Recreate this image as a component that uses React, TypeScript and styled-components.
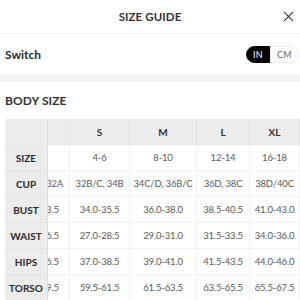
import React, { useLayoutEffect, useRef, useState } from "react";
import styled, { createGlobalStyle } from "styled-components";

const GlobalStyle = createGlobalStyle`
	html, body {
		margin: 0;
		padding: 0;
		background: #fff;
		font-family: Lato, "Open Sans", "Liberation Sans", sans-serif;
		color: #222;
		-webkit-font-smoothing: antialiased;
	}
`;

const Page = styled.div`
	width: 300px;
	height: 300px;
	overflow: hidden;
	background: #fff;
`;

const Header = styled.header`
	display: grid;
	grid-template-columns: 1fr auto 1fr;
	align-items: center;
	height: 33px;
	border-bottom: 1px solid #f1f1f1;
`;

const Title = styled.h1`
	grid-column: 2;
	margin: 0;
	font-size: 11.5px;
	font-weight: 700;
	color: #333;
	letter-spacing: 0.1px;
`;

const CloseButton = styled.button`
	justify-self: end;
	display: flex;
	align-items: center;
	justify-content: center;
	width: 20px;
	height: 20px;
	margin-right: 2px;
	padding: 0;
	border: none;
	background: none;
	color: #333;
	svg {
		width: 11px;
		height: 11px;
	}
`;

const SwitchRow = styled.div`
	display: flex;
	align-items: center;
	justify-content: space-between;
	height: 40px;
	padding: 0 1px 0 5px;
`;

const Label = styled.span`
	font-size: 12px;
	font-weight: 700;
	color: #2a2a2a;
`;

const Toggle = styled.div`
	display: flex;
	height: 17px;
`;

const ToggleOption = styled.button<{ $active: boolean; $side: "left" | "right" }>`
	display: flex;
	align-items: center;
	justify-content: center;
	width: ${(p) => (p.$side === "left" ? "24px" : "29px")};
	height: 100%;
	padding: 0;
	font-family: inherit;
	font-size: 9px;
	letter-spacing: 0.3px;
	border: 1px solid ${(p) => (p.$active ? "#000" : "#ececec")};
	background: ${(p) => (p.$active ? "#000" : "#fff")};
	color: ${(p) => (p.$active ? "#fff" : "#666")};
	border-radius: ${(p) => (p.$side === "left" ? "9px 0 0 9px" : "0 9px 9px 0")};
`;

const Band = styled.div`
	height: 8px;
	background: #f4f4f4;
`;

const SectionTitle = styled.h2`
	display: flex;
	align-items: center;
	height: 37px;
	margin: 0;
	padding-left: 5px;
	font-size: 12px;
	font-weight: 700;
	color: #333;
	letter-spacing: 0.1px;
`;

const TableScroll = styled.div`
	margin-left: 5px;
	overflow-x: auto;
	scrollbar-width: none;
	&::-webkit-scrollbar {
		display: none;
	}
`;

const Table = styled.table`
	table-layout: fixed;
	width: 334px;
	border-collapse: separate;
	border-spacing: 0;
	font-size: 10px;
`;

const HeadCell = styled.th<{ $sticky?: boolean }>`
	height: 25px;
	padding: 0;
	background: #ececec;
	border-right: 1px solid #e3e3e3;
	border-bottom: 1px solid #e6e6e6;
	font-weight: 700;
	color: #333;
	text-align: center;
	${(p) =>
		p.$sticky &&
		`
		position: sticky;
		left: 0;
		z-index: 1;
		border-right: 1px solid #dedede;
	`}
`;

const RowLabel = styled.th`
	position: sticky;
	left: 0;
	z-index: 1;
	height: 25px;
	padding: 0;
	background: #ececec;
	border-right: 1px solid #dedede;
	border-bottom: 1px solid #e3e3e3;
	font-weight: 700;
	color: #2a2a2a;
	text-align: center;
`;

const Cell = styled.td`
	height: 25px;
	padding: 0;
	border-right: 1px solid #f0f0f0;
	border-bottom: 1px solid #f0f0f0;
	font-size: 9.5px;
	letter-spacing: -0.15px;
	color: #5a5a5a;
	text-align: center;
	white-space: nowrap;
`;

const sizes = ["XS", "S", "M", "L", "XL"];
const widths = [43, 61, 60, 67, 53, 50];

const rows: { label: string; values: string[] }[] = [
	{ label: "SIZE", values: ["0-2", "4-6", "8-10", "12-14", "16-18"] },
	{ label: "CUP", values: ["30A/B, 32A", "32B/C, 34B", "34C/D, 36B/C", "36D, 38C", "38D/40C"] },
	{ label: "BUST", values: ["32.0-33.5", "34.0-35.5", "36.0-38.0", "38.5-40.5", "41.0-43.0"] },
	{ label: "WAIST", values: ["25.0-26.5", "27.0-28.5", "29.0-31.0", "31.5-33.5", "34.0-36.0"] },
	{ label: "HIPS", values: ["35.0-36.5", "37.0-38.5", "39.0-41.0", "41.5-43.5", "44.0-46.0"] },
	{ label: "TORSO", values: ["57.5-59.5", "59.5-61.5", "61.5-63.5", "63.5-65.5", "65.5-67.5"] },
];

const SizeTable = () => {
	const scrollRef = useRef<HTMLDivElement>(null);

	// table is shown scrolled a little, the XS column half under the labels
	useLayoutEffect(() => {
		if (scrollRef.current) scrollRef.current.scrollLeft = 39;
	}, []);

	return (
		<TableScroll ref={scrollRef}>
			<Table>
				<colgroup>
					{widths.map((w, i) => (
						<col key={i} style={{ width: w }} />
					))}
				</colgroup>
				<thead>
					<tr>
						<HeadCell $sticky></HeadCell>
						{sizes.map((s) => (
							<HeadCell key={s}>{s}</HeadCell>
						))}
					</tr>
				</thead>
				<tbody>
					{rows.map((row) => (
						<tr key={row.label}>
							<RowLabel>{row.label}</RowLabel>
							{row.values.map((v, i) => (
								<Cell key={i}>{v}</Cell>
							))}
						</tr>
					))}
				</tbody>
			</Table>
		</TableScroll>
	);
};

export default function App() {
	const [unit, setUnit] = useState<"IN" | "CM">("IN");
	return (
		<>
			<GlobalStyle />
			<Page>
				<Header>
					<Title>SIZE GUIDE</Title>
					<CloseButton aria-label="close">
						<svg viewBox="0 0 12 12" fill="none" stroke="currentColor" strokeWidth="1.2">
							<path d="M1 1L11 11M11 1L1 11" />
						</svg>
					</CloseButton>
				</Header>
				<SwitchRow>
					<Label>Switch</Label>
					<Toggle>
						<ToggleOption $side="left" $active={unit === "IN"} onClick={() => setUnit("IN")}>
							IN
						</ToggleOption>
						<ToggleOption $side="right" $active={unit === "CM"} onClick={() => setUnit("CM")}>
							CM
						</ToggleOption>
					</Toggle>
				</SwitchRow>
				<Band />
				<SectionTitle>BODY SIZE</SectionTitle>
				<SizeTable />
			</Page>
		</>
	);
}
